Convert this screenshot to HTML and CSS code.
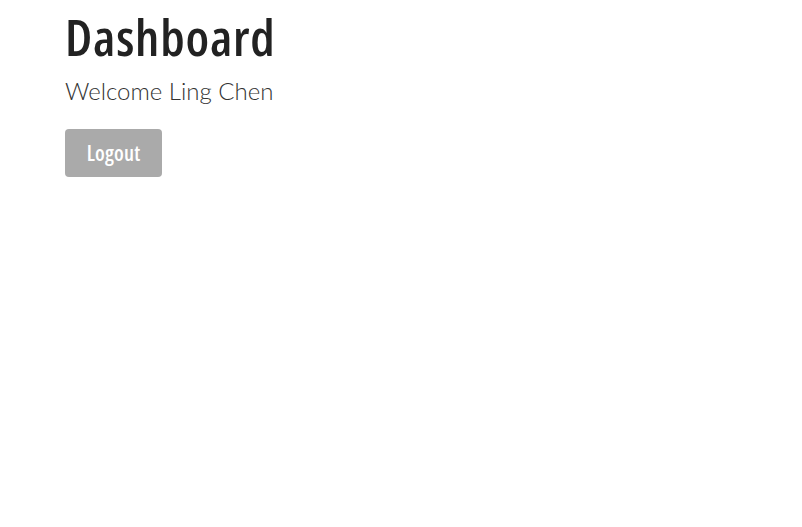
FILE: index.html
```html
<!DOCTYPE html>
<html>
<head>
<meta charset="utf-8">
<link rel="stylesheet" href="styles.css">
</head>
<body>
<main class="page">
  <h1 class="title">Dashboard</h1>
  <p class="welcome">Welcome Ling Chen</p>
  <button class="logout">Logout</button>
</main>
</body>
</html>
```

FILE: styles.css
```css
html, body {
  margin: 0;
  padding: 0;
  background: #fff;
}
.page {
  padding: 6px 0 0 65px;
  display: flex;
  flex-direction: column;
  align-items: flex-start;
}
.title {
  margin: 0;
  font-family: "Open Sans", sans-serif;
  font-stretch: 75%;
  font-weight: 600;
  font-size: 51px;
  line-height: 60px;
  color: #222;
  letter-spacing: 0.8px;
}
.welcome {
  margin: 11px 0 0 0;
  font-family: "Lato", "Open Sans", sans-serif;
  font-weight: 300;
  font-size: 24px;
  line-height: 28px;
  color: #333;
}
.logout {
  margin-top: 24px;
  width: 97px;
  height: 48px;
  border: none;
  border-radius: 4px;
  background: #aaaaaa;
  color: #fff;
  font-family: "Open Sans", sans-serif;
  font-stretch: 75%;
  font-weight: 600;
  font-size: 21px;
  letter-spacing: 0.2px;
  padding: 0;
}
```
